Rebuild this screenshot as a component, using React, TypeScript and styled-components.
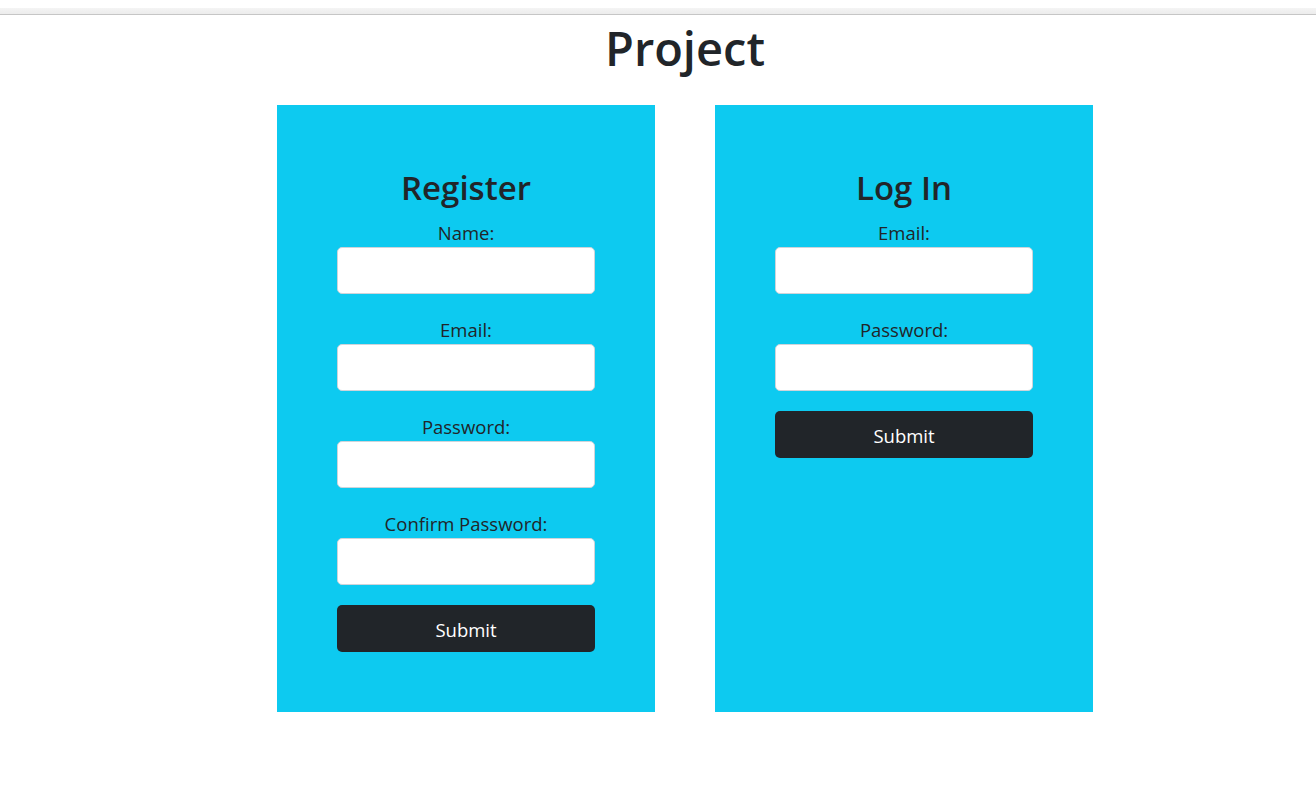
import React from "react";
import styled, { createGlobalStyle } from "styled-components";

const Global = createGlobalStyle`
  * { box-sizing: border-box; }
  body {
    margin: 0;
    background: #fff;
    color: #212529;
    font-family: "Open Sans", "Noto Sans", sans-serif;
  }
`;

const TopStrip = styled.div`
  margin-top: 8px;
  height: 7px;
  background: linear-gradient(#f4f4f4, #ececec);
  border-bottom: 1px solid #c6c6c6;
`;

const Page = styled.main`
  padding-left: 54px;
  display: flex;
  flex-direction: column;
  align-items: center;
`;

const Title = styled.h1`
  margin: 0 0 10px;
  padding-top: 3px;
  height: 60px;
  font-size: 47px;
  line-height: 60px;
  font-weight: 600;
  color: #212529;
`;

const Row = styled.div`
  margin-top: 20px;
  display: flex;
  align-items: stretch;
  gap: 60px;
`;

const Card = styled.form`
  width: 378px;
  min-height: 607px;
  padding: 60px;
  background: #0dcaf0;
  display: flex;
  flex-direction: column;
`;

const CardTitle = styled.h3`
  margin: 0 0 10px;
  height: 42px;
  padding-top: 2px;
  font-size: 33px;
  line-height: 42px;
  font-weight: 600;
  text-align: center;
  color: #212529;
`;

const Field = styled.div`
  display: flex;
  flex-direction: column;
  margin-bottom: 20px;
`;

const Label = styled.label`
  display: block;
  height: 30px;
  padding-top: 1px;
  font-size: 18.5px;
  line-height: 30px;
  text-align: center;
  color: #212529;
`;

const Input = styled.input`
  width: 258px;
  height: 47px;
  border: 1px solid #ced4da;
  border-radius: 5px;
  background: #fff;
  font-size: 20px;
  padding: 0 15px;
  outline: none;
`;

const Button = styled.button`
  width: 258px;
  height: 47px;
  padding-top: 2px;
  border: none;
  border-radius: 5px;
  background: #212529;
  color: #fff;
  font-family: inherit;
  font-size: 18.5px;
  cursor: pointer;
`;

const RegisterFields = ["Name:", "Email:", "Password:", "Confirm Password:"];
const LoginFields = ["Email:", "Password:"];

function FormCard({ title, fields }: { title: string; fields: string[] }) {
  return (
    <Card onSubmit={(e) => e.preventDefault()}>
      <CardTitle>{title}</CardTitle>
      {fields.map((f) => (
        <Field key={f}>
          <Label>{f}</Label>
          <Input type={f.includes("Password") ? "password" : "text"} />
        </Field>
      ))}
      <Button type="submit">Submit</Button>
    </Card>
  );
}

export default function App() {
  return (
    <>
      <Global />
      <TopStrip />
      <Page>
        <Title>Project</Title>
        <Row>
          <FormCard title="Register" fields={RegisterFields} />
          <FormCard title="Log In" fields={LoginFields} />
        </Row>
      </Page>
    </>
  );
}
